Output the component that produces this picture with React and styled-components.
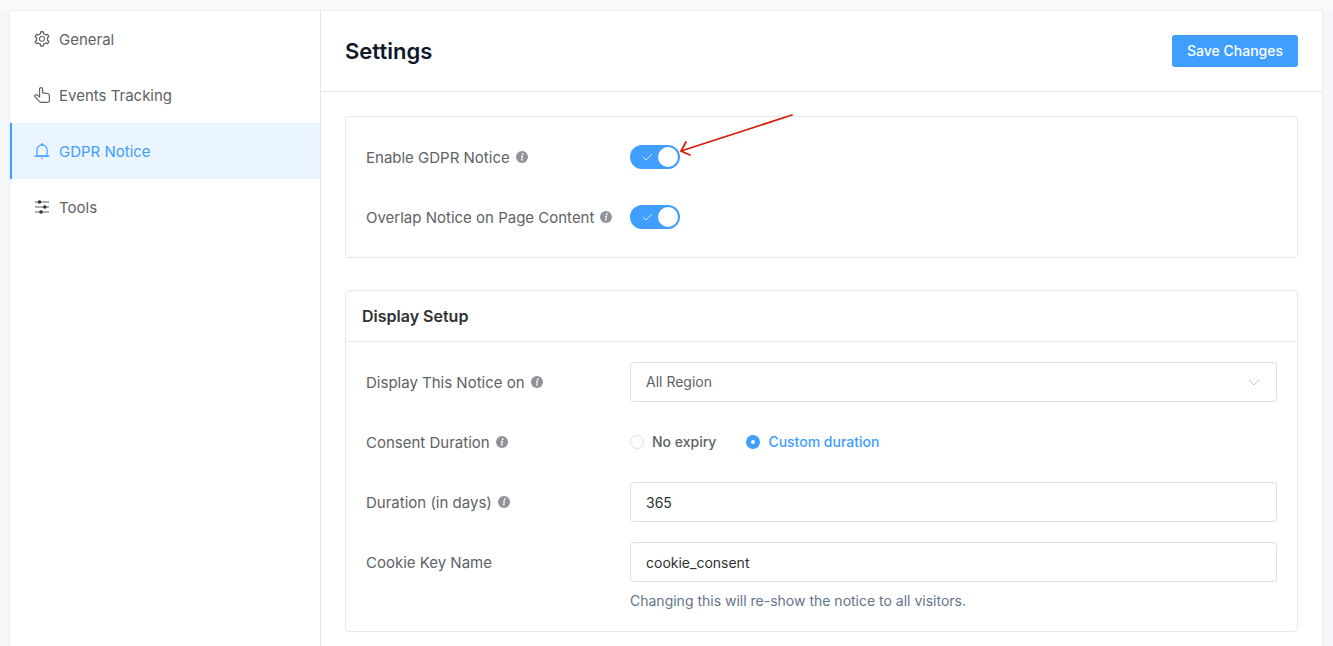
import React, { useState } from 'react';
import styled, { createGlobalStyle } from 'styled-components';
import { AiOutlineSetting } from 'react-icons/ai';

const GlobalStyle = createGlobalStyle`
  * {
    box-sizing: border-box;
  }

  body {
    margin: 0;
    background-color: #f5f7fa;
    color: #606266;
    font-family: Inter, 'Liberation Sans', sans-serif;
    font-size: 14px;
  }

  button, input, select {
    font-family: inherit;
  }
`;

const Page = styled.div`
  display: flex;
  flex-direction: column;
  min-height: 100vh;
`;

const TopStrip = styled.div`
  height: 11px;
  background-color: #f8fafc;
`;

const Shell = styled.div`
  display: flex;
  flex: 1;
  margin: 0 11px 0 10px;
  background-color: #ffffff;
  box-shadow: 0 0 2px rgba(15, 23, 42, 0.14);
`;

const Sidebar = styled.nav`
  flex: 0 0 311px;
  border-right: 1px solid #e4e7ed;
`;

const NavLink = styled.a`
  display: flex;
  align-items: center;
  gap: 8px;
  height: 56px;
  padding-left: 21px;
  border-left: 2px solid ${({ $active }) => ($active ? '#409eff' : 'transparent')};
  background-color: ${({ $active }) => ($active ? '#ebf5ff' : 'transparent')};
  color: ${({ $active }) => ($active ? '#409eff' : '#606266')};
  font-size: 15px;
  text-decoration: none;

  svg {
    width: 18px;
    height: 18px;
  }
`;

const Main = styled.main`
  flex: 1;
  min-width: 0;
`;

const Header = styled.header`
  display: flex;
  align-items: center;
  justify-content: space-between;
  height: 81px;
  padding: 0 24px;
  border-bottom: 1px solid #e4e7ed;
`;

const Title = styled.h1`
  margin: 0;
  color: #0f172a;
  font-size: 22px;
  font-weight: 600;
`;

const SaveButton = styled.button`
  height: 32px;
  padding: 0 15px 2px;
  border: 0;
  border-radius: 3px;
  background-color: #409eff;
  color: #ffffff;
  font-size: 14px;
  font-weight: 500;
  cursor: pointer;
`;

const Content = styled.div`
  display: flex;
  flex-direction: column;
  gap: 32px;
  padding: 24px 24px 12px;
`;

const Card = styled.section`
  border: 1px solid #e4e7ed;
  border-radius: 4px;
`;

const CardTitle = styled.h2`
  margin: 0;
  padding: 0 16px;
  border-bottom: 1px solid #e4e7ed;
  color: #303133;
  font-size: 16px;
  font-weight: 600;
  line-height: 50px;
`;

const CardBody = styled.div`
  display: flex;
  flex-direction: column;
  gap: 20px;
  padding: 20px;
`;

const Row = styled.div`
  display: grid;
  grid-template-columns: 264px minmax(0, 1fr);
  align-items: start;
`;

const RowLabel = styled.div`
  display: flex;
  align-items: center;
  gap: 6px;
  height: 40px;
  font-size: 15px;
  white-space: nowrap;
`;

const Control = styled.div`
  display: flex;
  align-items: center;
  min-height: 40px;
`;

const SwitchWrap = styled.span`
  position: relative;
  display: flex;
`;

const SwitchInput = styled.input`
  appearance: none;
  width: 50px;
  height: 24px;
  margin: 0;
  border-radius: 12px;
  background-color: #dcdfe6;
  cursor: pointer;

  &::after {
    content: '';
    position: absolute;
    top: 2px;
    left: 2px;
    width: 20px;
    height: 20px;
    border-radius: 50%;
    background-color: #ffffff;
  }

  &:checked {
    background-color: #409eff;
  }

  &:checked::after {
    left: 28px;
  }
`;

const SwitchCheck = styled.svg`
  position: absolute;
  top: 7px;
  left: 12px;
  pointer-events: none;
`;

const Arrow = styled.svg`
  position: absolute;
  top: -31px;
  left: 49px;
  pointer-events: none;
`;

const TextInput = styled.input`
  width: 100%;
  height: 40px;
  padding: 0 15px;
  border: 1px solid #dcdfe6;
  border-radius: 4px;
  background-color: #ffffff;
  color: #303133;
  font-size: 14px;
`;

const SelectWrap = styled.div`
  position: relative;
  flex: 1;
`;

const Select = styled.select`
  display: block;
  appearance: none;
  width: 100%;
  height: 40px;
  padding: 0 36px 2px 15px;
  border: 1px solid #dcdfe6;
  border-radius: 4px;
  background-color: #ffffff;
  color: #606266;
  font-size: 14px;
`;

const Chevron = styled.svg`
  position: absolute;
  top: 13px;
  right: 16px;
  pointer-events: none;
`;

const RadioGroup = styled.div`
  display: flex;
  gap: 30px;
`;

const RadioLabel = styled.label`
  display: flex;
  align-items: center;
  gap: 8px;
  color: ${({ $checked }) => ($checked ? '#409eff' : '#606266')};
  font-weight: 500;
  line-height: 16px;
  cursor: pointer;
`;

const Radio = styled.input`
  appearance: none;
  width: 14px;
  height: 14px;
  margin: 0;
  border: 1px solid #dcdfe6;
  border-radius: 50%;

  &:checked {
    border: 5px solid #409eff;
  }
`;

const Hint = styled.p`
  grid-column: 2;
  margin: 0;
  padding-top: 9px;
  color: #64748b;
  font-size: 14px;
  line-height: 20px;
`;

const PointerIcon = () => (
  <svg viewBox="-1 -1 18 18" fill="none" stroke="currentColor" strokeWidth="1.2" strokeLinejoin="round" strokeLinecap="round">
    <path d="M5.6 9.9V2.1a1.5 1.5 0 0 1 3 0v3.7l5 .7c1.1.2 1.8.9 1.8 1.9v5.2c0 1-.7 1.8-1.7 1.8H7.3c-.7 0-1.2-.2-1.7-.8L1.1 10c-.6-.7-.5-1.6.2-2 .6-.4 1.3-.3 1.8.1z" />
  </svg>
);

const BellIcon = () => (
  <svg viewBox="0 0 1024 1024" fill="currentColor">
    <path d="M512 64a64 64 0 0 1 64 64v64H448v-64a64 64 0 0 1 64-64z" />
    <path d="M256 768h512V448a256 256 0 1 0-512 0v320zm256-640a320 320 0 0 1 320 320v384H192V448a320 320 0 0 1 320-320z" />
    <path d="M96 768h832q32 0 32 32t-32 32H96q-32 0-32-32t32-32zm352 128h128a64 64 0 0 1-128 0z" />
  </svg>
);

const SlidersIcon = () => (
  <svg viewBox="-1 -1 18 18" fill="none" stroke="currentColor" strokeWidth="1.2">
    <path d="M1 3h14M1 8h14M1 13h14" />
    <g fill="#303133" stroke="none">
      <circle cx="5.5" cy="3" r="1.8" />
      <circle cx="10.8" cy="8" r="1.8" />
      <circle cx="7" cy="13" r="1.8" />
    </g>
  </svg>
);

const InfoIcon = () => (
  <svg width="12" height="12" viewBox="0 0 12 12" aria-hidden="true">
    <circle cx="6" cy="6" r="6" fill="#909399" />
    <circle cx="6.8" cy="3.2" r="0.9" fill="#fff" />
    <path d="M5 5.4h1.4L5.6 9h1" fill="none" stroke="#fff" strokeWidth="1.1" />
  </svg>
);

const Toggle = ({ id, children }) => {
  const [on, setOn] = useState(true);
  return (
    <SwitchWrap>
      <SwitchInput id={id} type="checkbox" checked={on} onChange={() => setOn(!on)} />
      {on && (
        <SwitchCheck width="11" height="10" viewBox="0 0 11 10" fill="none" stroke="#d9ecff">
          <path d="M1 5l3 3 6-6" />
        </SwitchCheck>
      )}
      {children}
    </SwitchWrap>
  );
};

const Field = ({ label, htmlFor, info, hint, children }) => (
  <Row>
    <RowLabel>
      <label htmlFor={htmlFor}>{label}</label>
      {info && <InfoIcon />}
    </RowLabel>
    <Control>{children}</Control>
    {hint && <Hint>{hint}</Hint>}
  </Row>
);

const navItems = [
  { label: 'General', icon: AiOutlineSetting },
  { label: 'Events Tracking', icon: PointerIcon },
  { label: 'GDPR Notice', icon: BellIcon, active: true },
  { label: 'Tools', icon: SlidersIcon },
];

const App = () => {
  const [expiry, setExpiry] = useState('custom');
  return (
    <Page>
      <GlobalStyle />
      <TopStrip />
      <Shell>
        <Sidebar>
          {navItems.map(({ label, icon: Icon, active }) => (
            <NavLink key={label} href="#" $active={active}>
              <Icon />
              {label}
            </NavLink>
          ))}
        </Sidebar>
        <Main>
          <Header>
            <Title>Settings</Title>
            <SaveButton type="button">Save Changes</SaveButton>
          </Header>
          <Content>
            <Card>
              <CardBody>
                <Field label="Enable GDPR Notice" htmlFor="enable" info>
                  <Toggle id="enable">
                    <Arrow width="116" height="44" viewBox="0 0 116 44" fill="none" stroke="#d81e06" strokeWidth="1.8" strokeLinecap="round">
                      <path d="M113 1L2 37M7 28L2 37l9 4" />
                    </Arrow>
                  </Toggle>
                </Field>
                <Field label="Overlap Notice on Page Content" htmlFor="overlap" info>
                  <Toggle id="overlap" />
                </Field>
              </CardBody>
            </Card>
            <Card>
              <CardTitle>Display Setup</CardTitle>
              <CardBody>
                <Field label="Display This Notice on" htmlFor="region" info>
                  <SelectWrap>
                    <Select id="region">
                      <option>All Region</option>
                    </Select>
                    <Chevron width="14" height="14" viewBox="0 0 14 14" fill="none" stroke="#c0c4cc">
                      <path d="M2 5l5 5 5-5" />
                    </Chevron>
                  </SelectWrap>
                </Field>
                <Field label="Consent Duration" htmlFor="custom" info>
                  <RadioGroup>
                    <RadioLabel $checked={expiry === 'none'}>
                      <Radio type="radio" name="expiry" checked={expiry === 'none'} onChange={() => setExpiry('none')} />
                      No expiry
                    </RadioLabel>
                    <RadioLabel $checked={expiry === 'custom'}>
                      <Radio id="custom" type="radio" name="expiry" checked={expiry === 'custom'} onChange={() => setExpiry('custom')} />
                      Custom duration
                    </RadioLabel>
                  </RadioGroup>
                </Field>
                <Field label="Duration (in days)" htmlFor="days" info>
                  <TextInput id="days" type="text" defaultValue="365" />
                </Field>
                <Field
                  label="Cookie Key Name"
                  htmlFor="cookie"
                  hint="Changing this will re-show the notice to all visitors."
                >
                  <TextInput id="cookie" type="text" defaultValue="cookie_consent" />
                </Field>
              </CardBody>
            </Card>
          </Content>
        </Main>
      </Shell>
    </Page>
  );
};

export default App;
